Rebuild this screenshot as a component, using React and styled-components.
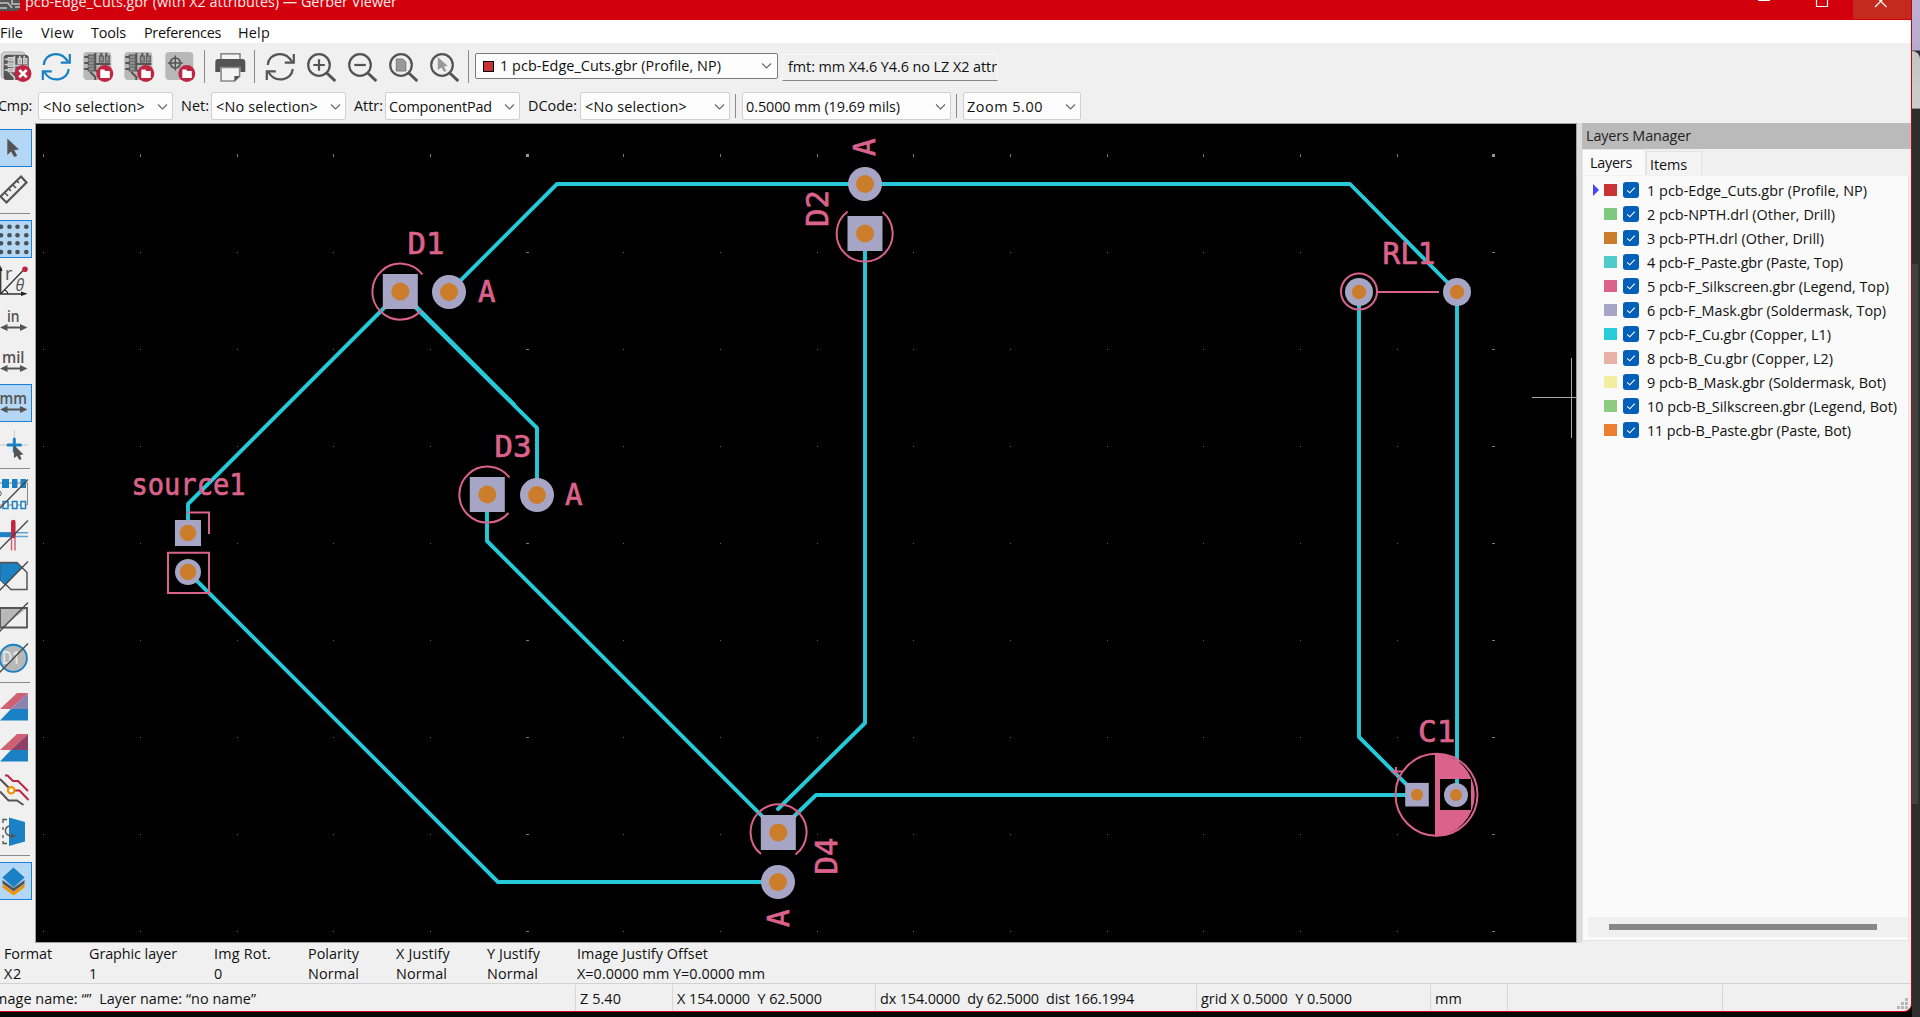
import React, { useLayoutEffect, useRef, useState } from "react";
import styled, { createGlobalStyle } from "styled-components";

const UI = '"Open Sans", "Noto Sans", sans-serif';
const INK = "#545454";
const BLUE = "#1a81c4";
const RED = "#bf2641";
const COPPER = "#26c9d8";
const SILK = "#db628b";
const MASK = "#a7a5c6";
const DRILL = "#cc7d2b";

const GlobalStyle = createGlobalStyle`
  html, body { margin: 0; padding: 0; overflow: hidden; background: #050505; }
  *, *::before, *::after { box-sizing: border-box; }
  svg { display: block; }
`;

const Desktop = styled.div`
  display: flex;
  width: 1920px;
  height: 1017px;
  overflow: hidden;
  background: #050505;
  font: 14.4px/20px ${UI};
  color: #111;
`;
const Window = styled.div`
  display: flex;
  flex-direction: column;
  width: 1912px;
  height: 1012px;
  background: #f0f0f0;
  border-right: 1px solid #c00410;
  border-bottom: 1px solid #c8030f;
  border-bottom-right-radius: 8px;
  overflow: hidden;
`;
const Backdrop = styled.div`
  display: flex;
  flex-direction: column;
  width: 8px;
  height: 1017px;
  background: linear-gradient(#bfb0d6, #b9aad0 50px, #2d2d2d 51px);
`;
const BackCard = styled.div`
  margin-top: 51px;
  height: 58px;
  background: linear-gradient(#c4c4c4, #cdcdca);
  border-top-right-radius: 8px;
  border-bottom: 1px solid #8a8a8a;
`;
const BackEdge = styled.div`
  margin-top: 155px;
  height: 540px;
  width: 6px;
  background: #414141;
`;

const Run = styled.span`
  display: inline-block;
  white-space: pre;
  flex: none;
`;
function T({ w, children }) {
  const ref = useRef(null);
  const [spacing, setSpacing] = useState(0);
  useLayoutEffect(() => {
    const natural = ref.current.getBoundingClientRect().width;
    setSpacing((w + 1 - natural) / String(children).length);
  }, [w, children]);
  return <Run ref={ref} style={{ letterSpacing: spacing }}>{children}</Run>;
}

const TitleBar = styled.div`
  display: flex;
  height: 20px;
  flex: none;
  background: #d2000d;
  color: #fff;
  overflow: hidden;
`;
const TitleText = styled.div`
  flex: 1;
  padding-left: 5px;
  margin-top: -8px;
  color: #ffe9e9;
`;
const TitleButton = styled.div`
  width: 58px;
  height: 19px;
  background: ${(p) => (p.$close ? "#c52b1c" : "transparent")};
`;

const MenuBar = styled.div`
  display: flex;
  align-items: center;
  height: 23px;
  flex: none;
  padding-top: 2px;
  background: #fff;
`;
const MenuItem = styled.div`
  width: ${(p) => p.$w}px;
`;

const Toolbar = styled.div`
  display: flex;
  align-items: center;
  height: 46px;
  flex: none;
`;
const ToolButton = styled.div`
  width: 32px;
  height: 32px;
  margin-right: 9px;
  flex: none;
`;
const Divider = styled.div`
  width: 1px;
  height: ${(p) => p.$h || 33}px;
  background: #8a8a8a;
  margin: 0 ${(p) => p.$after}px 0 ${(p) => p.$before || 0}px;
  flex: none;
`;
const Combo = styled.div`
  display: flex;
  align-items: center;
  justify-content: space-between;
  width: ${(p) => p.$w}px;
  height: ${(p) => (p.$strong ? 26 : 28)}px;
  padding: ${(p) => (p.$strong ? 0 : 2)}px ${(p) => (p.$strong ? 5 : 4)}px 0 ${(p) => p.$pad || 4}px;
  background: #fdfdfd;
  border: 1px solid ${(p) => (p.$strong ? "#7a7a7a" : "#d0d0d0")};
  border-radius: 2px;
  margin-right: ${(p) => p.$gap || 0}px;
  flex: none;
`;
const ComboLabel = styled.div`
  display: flex;
  align-items: center;
`;
const Chip = styled.span`
  width: 11px;
  height: 11px;
  margin-right: 6px;
  background: #c83434;
  border: 1px solid #000;
`;
const FormatBox = styled.div`
  display: flex;
  align-items: center;
  width: 216px;
  height: 27px;
  padding-left: 5px;
  margin-top: 2px;
  border: 1px solid #f9f9f9;
  border-bottom: 1px solid #868686;
`;
const OptionBar = styled.div`
  display: flex;
  align-items: center;
  height: 34px;
  flex: none;
`;
const OptionLabel = styled.div`
  width: ${(p) => p.$w}px;
  margin-left: ${(p) => p.$ml || 0}px;
  flex: none;
`;

const Main = styled.div`
  display: flex;
  height: 820px;
  flex: none;
`;
const SideBar = styled.div`
  display: flex;
  flex-direction: column;
  width: 35px;
  padding-top: 6px;
  flex: none;
`;
const SideButton = styled.div`
  width: 32px;
  height: 38px;
  margin-bottom: 3px;
  flex: none;
  border: 1px solid ${(p) => (p.$on ? "#1a7fd8" : "transparent")};
  border-left: none;
  background: ${(p) => (p.$on ? "#b3d7f4" : "transparent")};
`;
const SideRule = styled.div`
  width: 30px;
  height: 1px;
  margin: 2px 0 6px;
  background: #8a8a8a;
  flex: none;
`;
const Board = styled.div`
  width: 1542px;
  height: 820px;
  flex: none;
  border: 1px solid #a0a0a0;
  background: #000;
  overflow: hidden;
`;
const Sash = styled.div`
  width: 5px;
  background: #dcdcdc;
  flex: none;
`;

const Panel = styled.div`
  display: flex;
  flex-direction: column;
  flex: 1;
`;
const PanelTitle = styled.div`
  display: flex;
  align-items: center;
  height: 26px;
  padding-left: 4px;
  background: #bababa;
  color: #222;
  flex: none;
`;
const Tabs = styled.div`
  display: flex;
  align-items: flex-end;
  height: 27px;
  flex: none;
`;
const Tab = styled.div`
  width: ${(p) => p.$w}px;
  height: ${(p) => (p.$on ? 27 : 26)}px;
  padding: 3px 0 0 ${(p) => p.$pad}px;
  background: ${(p) => (p.$on ? "#fafafa" : "#f4f4f4")};
  border: 1px solid #e3e3e3;
  border-bottom: none;
  margin-bottom: ${(p) => (p.$on ? "0" : "-1px")};
`;
const Sheet = styled.div`
  display: flex;
  flex-direction: column;
  justify-content: space-between;
  width: 327px;
  height: 766px;
  margin-top: -1px;
  padding-top: 2px;
  background: #fafafa;
  border: 1px solid #e4e4e4;
  border-top-color: #f0f0f0;
`;
const LayerRow = styled.div`
  display: flex;
  align-items: center;
  height: 24px;
  padding-left: 10px;
`;
const LayerName = styled.span`
  display: flex;
  padding-top: 1px;
`;
const Marker = styled.span`
  width: 6px;
  height: 12px;
  margin-right: 5px;
  background: ${(p) => (p.$on ? "#4646f5" : "transparent")};
  clip-path: polygon(0 0, 100% 50%, 0 100%);
`;
const Swatch = styled.span`
  width: 13px;
  height: 12px;
  background: ${(p) => p.$c};
`;
const Check = styled.span`
  width: 16px;
  height: 16px;
  margin: 0 8px 0 6px;
  border-radius: 3px;
  background: #005fb8;
`;
const ScrollTrack = styled.div`
  height: 20px;
  margin: 0 0 3px 5px;
  padding: 7px 0 0 21px;
  background: #f0f0f0;
`;
const ScrollThumb = styled.div`
  width: 268px;
  height: 6px;
  background: #878787;
`;

const Info = styled.div`
  display: flex;
  height: 40px;
  flex: none;
  padding-left: 4px;
  padding-top: 1px;
`;
const InfoCell = styled.div`
  display: flex;
  flex-direction: column;
  align-items: flex-start;
  width: ${(p) => p.$w}px;
  flex: none;
`;
const StatusBar = styled.div`
  display: flex;
  flex: 1;
  border-top: 1px solid #d2d2d2;
`;
const StatusCell = styled.div`
  width: ${(p) => p.$w}px;
  padding: 4px 0 0 4px;
  margin-top: 1px;
  border-left: ${(p) => (p.$first ? "none" : "1px solid #d6d6d6")};
  flex: none;
`;
const StatusFirst = styled(StatusCell)`
  padding-left: 0;
  text-indent: -5px;
  overflow: hidden;
`;
const Grip = styled.div`
  margin-left: auto;
  align-self: flex-end;
`;

const Chevron = () => (
  <svg width="11" height="8" viewBox="0 0 11 8" fill="none" stroke="#666" strokeWidth="1.1">
    <path d="M1 1.5 5.5 6 10 1.5" />
  </svg>
);

/* ---------- top toolbar drawings ---------- */
const Svg32 = ({ children }) => (
  <svg width="32" height="32" viewBox="0.7 0 32 32" fill="none">{children}</svg>
);
const GerberTile = ({ dark }) => (
  <g>
    <rect x="2" y="2" width="28" height="28" rx="4" fill={dark ? "#545454" : "#b8b8b8"} />
    <g stroke={dark ? "#c8c8c8" : "#545454"} strokeWidth="2">
      <path d="M3 7h6M3 13h6M3 19h6M14 3v9M20 3v7M25 3v5M14 14h15M14 12v8l6 5v5M20 18h9M9 22l5 5v3" />
    </g>
    <g fill={dark ? "#b8b8b8" : "#8e8e8e"} stroke={dark ? "#dadada" : "#545454"}>
      <rect x="7" y="5" width="6" height="4" /><rect x="7" y="11" width="6" height="4" />
      <rect x="7" y="17" width="6" height="4" /><rect x="18" y="6" width="4" height="6" />
      <rect x="24" y="6" width="4" height="6" />
    </g>
  </g>
);
const FolderBadge = () => (
  <g>
    <circle cx="23.5" cy="23.5" r="8.5" fill={RED} />
    <path d="M19 19.5h4l1 1.5h4.5v7H19z" fill="#fff" />
  </g>
);
const ClearIcon = () => (
  <Svg32>
    <rect x="2" y="2" width="24" height="27" rx="4" fill="#d4d4d4" stroke="#aaa" />
    <g transform="translate(2.5 3) scale(.9)"><GerberTile dark /></g>
    <circle cx="23.7" cy="23.5" r="8.5" fill={RED} />
    <path d="m20 20 7.4 7.2m0-7.2L20 27.2" stroke="#fff" strokeWidth="2.6" />
  </Svg32>
);
const Refresh = ({ color }) => (
  <Svg32>
    <g stroke={color} strokeWidth="2.2">
      <path d="M3.5 15C4 3.5 20-1 28 12" /><path d="M29.5 4v8.7h-9" />
      <path d="M28.5 19C27 31 11 33.5 4 22" /><path d="M2.5 30v-8.7h9" />
    </g>
  </Svg32>
);
const OpenGerber = () => <Svg32><GerberTile /><FolderBadge /></Svg32>;
const OpenDrill = () => (
  <Svg32>
    <rect x="2" y="2" width="28" height="28" rx="4" fill="#b8b8b8" />
    <circle cx="12" cy="13" r="5" stroke={INK} strokeWidth="1.7" />
    <path d="M4.5 13h15M12 5.5v15" stroke={INK} strokeWidth="1.4" />
    <FolderBadge />
  </Svg32>
);
const Printer = () => (
  <Svg32>
    <rect x="6.7" y="3.8" width="19" height="7" fill="#f4f4f4" stroke="#888" strokeWidth="1.6" />
    <path d="M1 12q0-3 3-3h24q3 0 3 3v10h-5v-5H6v5H1z" fill={INK} />
    <path d="M6.8 17.5h18.5v9l-5 4.500H6.8z" fill="#f4f4f4" stroke="#888" strokeWidth="1.6" />
    <path d="m25.5 26-5.5 5.5V26z" fill={INK} />
  </Svg32>
);
const Zoomer = ({ kind }) => (
  <Svg32>
    <circle cx="13.7" cy="15" r="10.8" stroke={INK} strokeWidth="2.2" />
    <path d="m21.5 23 8.5 8" stroke={INK} strokeWidth="3" />
    {kind === "in" && <path d="M8 15h11.5M13.7 9.3v11.5" stroke={INK} strokeWidth="2.2" />}
    {kind === "out" && <path d="M8 15h11.5" stroke={INK} strokeWidth="2.2" />}
    {kind === "fit" && <path d="M9 9h6.5l3 3v9H9z" fill="#999" stroke="#777" />}
    {kind === "sel" && <path d="M9.5 7v13l3.5-2.5 3 4.5 2-1-2.3-4.5 3.8-.5z" fill="#999" />}
  </Svg32>
);

/* ---------- left toolbar drawings ---------- */
const Svg36 = ({ children }) => (
  <svg width="31" height="36" viewBox="0 0 31 36" fill="none">{children}</svg>
);
const Slash = () => <path d="M28 3.5-1 33" stroke="#484848" strokeWidth="1.3" />;
const IconText = styled.text`
  font-family: ${UI};
  font-weight: ${(p) => p.$b || 600};
`;
const Unit = ({ x, w, children }) => (
  <Svg36>
    <IconText x={x} y="18.5" fontSize="16" textLength={w} lengthAdjust="spacingAndGlyphs" fill={INK}>{children}</IconText>
    <path d="M3 24.5h21" stroke={INK} strokeWidth="2" />
    <path d="M0 24.5 7.5 21v7zM27.5 24.5 20 21v7z" fill={INK} />
  </Svg36>
);
const StackIcon = ({ overlap }) => (
  <Svg36>
    <path d="M0 19 17 3h11L11 19z" fill="#cf6174" /><path d="M28 3v16H11z" fill={overlap} />
    <path d="M11 19h17v11.500H0z" fill={BLUE} />
  </Svg36>
);
const sideIcons = {
  arrow: <Svg36><path d="M7.3 8.5v16.5l3.7-3.5 3.2 5.500 3-1.300-3-5.700 4.800-.5z" fill={INK} /></Svg36>,
  ruler: (
    <Svg36>
      <path d="M21 5.5 26.5 11.5 6.5 31.5.5 25.5z" stroke={INK} strokeWidth="2.2" />
      <path d="m5 22 3 3m1-7 2 2m2-6 3 3m1-7 2 2" stroke={INK} strokeWidth="1.7" />
    </Svg36>
  ),
  grid: (
    <Svg36>
      {[1, 9.5, 17.5, 26.3].map((x) => [5.7, 14.3, 22.3, 31].map((y) => (
        <circle key={`${x}-${y}`} cx={x} cy={y} r="2.3" fill="#4a5056" />
      )))}
    </Svg36>
  ),
  polar: (
    <Svg36>
      <path d="M.7 6v26h23M1 31.5 24 7.5M4.5 28q3 1 3.5 4" stroke="#333" strokeWidth="1.3" />
      <path d="M27.5 31.7 21 29.5v4.500zM.5 3l2 6H0z" fill="#222" />
      <circle cx="25" cy="7.3" r="2.8" fill={RED} />
      <IconText $b={500} x="5" y="18" fontSize="18" fill={INK}>r</IconText>
      <IconText $b={500} x="15.5" y="28.5" fontSize="16" fontStyle="italic" fill={INK}>θ</IconText>
    </Svg36>
  ),
  inch: <Unit x={7} w={12.5}>in</Unit>,
  mil: <Unit x={2} w={22.5}>mil</Unit>,
  mm: <Unit x={-0.5} w={27.5}>mm</Unit>,
  cursor: (
    <Svg36>
      <path d="M14.3 4v28M0 19h28" stroke="#c8c8c8" />
      <path d="M14.3 13v12.5M8 19h12.5" stroke={BLUE} strokeWidth="3" strokeLinecap="round" />
      <path d="M14 19v13l3-2 2.5 4 2-1-1.5-4 3.5-.5z" fill={INK} />
    </Svg36>
  ),
  dcodes: (
    <Svg36>
      <path d="M0 7h28M0 29h27M27.5 7v22" stroke="#888" />
      <path d="M2 3h7v9H2zM12 3h5.5v9H12zM20.5 3h5.5v9h-5.5z" fill={BLUE} />
      <path d="M3 25.5h5v7H3zM12.5 25.5h4.5v7h-4.500zM21 25.500h4.500v7H21z" fill="#f0f0f0" stroke={BLUE} strokeWidth="1.5" />
      <path d="M0 15q3 2 0 5" stroke={INK} />
      <Slash />
    </Svg36>
  ),
  lines: (
    <Svg36>
      <path d="M0 15.7h28M0 19.5h28" stroke="#5aa2d2" strokeWidth="1.6" />
      <path d="M0 17.7h12" stroke={BLUE} strokeWidth="4.5" />
      <path d="M11.5 17v16.500M15 17v16.500" stroke="#d0607a" strokeWidth="1.5" />
      <path d="M13.3 5v14" stroke={RED} strokeWidth="4.5" strokeLinecap="round" />
      <Slash />
    </Svg36>
  ),
  polygons: (
    <Svg36>
      <path d="M0 4.5h17l10 10v17H11L0 21z" stroke={INK} strokeWidth="1.5" />
      <path d="M0 5h17l5 5L5 27l-5-5z" fill={BLUE} stroke={INK} />
      <Slash />
    </Svg36>
  ),
  negative: (
    <Svg36>
      <path d="M0 9h27L2 29H0z" fill="#b8b8b8" />
      <path d="M0 9h27v19.500H0z" stroke="#555" strokeWidth="1.8" />
      <Slash />
    </Svg36>
  ),
  dnum: (
    <Svg36>
      <circle cx="13.3" cy="18.3" r="13.6" fill="#b8b8b8" stroke={BLUE} strokeWidth="1.9" />
      <IconText x="2" y="23.5" fontSize="18" textLength="18" lengthAdjust="spacingAndGlyphs" fill="#e8e8e8">D1</IconText>
      <Slash />
    </Svg36>
  ),
  stack: <StackIcon overlap="#8984b0" />,
  stackDark: <StackIcon overlap="#8d4068" />,
  xor: (
    <Svg36>
      <path d="M5 3.5h2.5L13 9h5l10 10M15 18.5h4.5l9 9.5" stroke={RED} strokeWidth="2" />
      <path d="m0 7 9 9M0 19.5l8.5 9H17l6.5 4.5" stroke={INK} strokeWidth="2" />
      <circle cx="11.2" cy="18.3" r="3.2" fill="#fff" stroke="#f39200" strokeWidth="2.2" />
    </Svg36>
  ),
  flip: (
    <Svg36>
      <path d="M9 4.5 25 9v19.500L9 33z" fill={BLUE} />
      <path d="M7 6.500H3V10M3 14v3M3 22v3M3 28v2.500h4" stroke={INK} strokeWidth="1.3" />
      <path d="M9 13c-5 2-5 9 2 10" stroke={INK} strokeWidth="1.4" /><path d="m16 23-5-2.500v5z" fill={INK} />
    </Svg36>
  ),
  layers: (
    <Svg36>
      <path d="m2.5 21 11 8 11-8v3.500l-11 8-11-8z" fill="#f39200" />
      <path d="m2.5 17 11 8 11-8v3.500l-11 8-11-8z" fill={INK} />
      <path d="m13.5 4.500 11.200 10-11.200 10-11.200-10z" fill={BLUE} />
    </Svg36>
  ),
};
const side = [
  ["arrow", 1], ["ruler"], null, ["grid", 1], ["polar"], ["inch"], ["mil"], ["mm", 1], ["cursor"], null,
  ["dcodes"], ["lines"], ["polygons"], ["negative"], ["dnum"], null,
  ["stack"], ["stackDark"], ["xor"], ["flip"], null, ["layers", 1],
];

/* ---------- board drawing ---------- */
const SilkText = styled.text`
  font-family: "DejaVu Sans Mono", monospace;
  font-size: 30.5px;
  fill: ${SILK};
  stroke: ${SILK};
  stroke-width: 0.7px;
`;
const Ref = ({ x, y, w, up, children }) => (
  <SilkText
    transform={`translate(${x} ${y})${up ? " rotate(-90)" : ""}`}
    textLength={w}
    lengthAdjust="spacingAndGlyphs"
  >
    {children}
  </SilkText>
);
const Pad = ({ x, y, r, d, square }) => (
  <g>
    {square
      ? <rect x={x - r} y={y - r} width={r * 2} height={r * 2} fill={MASK} />
      : <circle cx={x} cy={y} r={r} fill={MASK} />}
    <circle cx={x} cy={y} r={d} fill={DRILL} />
  </g>
);
const gridDots = [];
for (let i = 0; i < 16; i++) {
  for (let j = 0; j < 9; j++) {
    const wide = i % 10 === 5;
    const tall = j === 0;
    gridDots.push(
      <rect
        key={`${i}-${j}`}
        x={Math.round(43.2 + i * 96.67) - (wide ? 1 : 0)}
        y={Math.round(155 + j * 96.95) - (tall ? 1 : 0)}
        width={wide ? 3 : 1}
        height={tall ? 3 : 1}
        fill={wide && tall ? "#959595" : wide || tall ? "#777" : "#606060"}
      />
    );
  }
}
const BoardDrawing = () => (
  <svg width="1540" height="818" viewBox="36 124 1540 818" fill="none">
    {gridDots}
    <g stroke={COPPER} strokeWidth="3.9" strokeLinecap="round" strokeLinejoin="round">
      <path d="M449 292 557 184H1350L1457 292V795" />
      <path d="M1359 292V737L1417 795" />
      <path d="M865 234V723L778 809" />
      <path d="M778 832 816 795H1417" />
      <path d="M487 495V541L778 832" />
      <path d="M537 495V428L400 292 188 504V533" />
      <path d="M401 291.5 514 404.5" />
      <path d="M188 572 498 882H778" />
    </g>
    <g stroke={SILK} strokeWidth="2">
      <path d="M422.5 274.5A28 28 0 1 0 421.5 310" />
      <path d="M847.5 211.5A28 28 0 1 0 882.5 212" />
      <path d="M509.5 477.5A28 28 0 1 0 508.5 513" />
      <path d="M761 854A28 28 0 1 1 795.5 854.5" />
      <path d="M187 512.5H209V534M168 552.7H209V593H168z" />
      <circle cx="1359" cy="291.5" r="18" />
      <path d="M1377 292H1439" />
      <circle cx="1436.5" cy="794.7" r="41" />
      <path d="M1391 771.5H1402M1396 767V776" />
    </g>
    <path fillRule="evenodd" fill={SILK} d="M1435 753A41.8 41.8 0 0 1 1435 836.5zM1440 779H1471V810H1440z" />
    <Pad x={400.3} y={291.5} r={17.5} d={9} square />
    <Pad x={449} y={292} r={17} d={9} />
    <Pad x={865} y={184} r={17} d={9} />
    <Pad x={865} y={233.5} r={17.5} d={9} square />
    <Pad x={487.3} y={494.5} r={17.5} d={9} square />
    <Pad x={537} y={495} r={17} d={9} />
    <Pad x={778.3} y={832.5} r={17.5} d={9} square />
    <Pad x={778} y={882} r={17} d={9} />
    <Pad x={188} y={533} r={13} d={8.2} square />
    <Pad x={188} y={572} r={13} d={8.2} />
    <Pad x={1359} y={292} r={14} d={7.2} />
    <Pad x={1457} y={292} r={14} d={7.2} />
    <Pad x={1417} y={794.7} r={11.8} d={6} square />
    <Pad x={1456} y={795} r={12} d={6} />
    <Ref x={407.5} y={254} w={37}>D1</Ref>
    <Ref x={478} y={301.5} w={17.5}>A</Ref>
    <Ref x={494.5} y={457} w={37}>D3</Ref>
    <Ref x={565} y={505} w={17.5}>A</Ref>
    <Ref x={827.5} y={227} w={37} up>D2</Ref>
    <Ref x={875} y={156} w={17.5} up>A</Ref>
    <Ref x={836.5} y={874.5} w={37} up>D4</Ref>
    <Ref x={788.5} y={927} w={17.5} up>A</Ref>
    <Ref x={131.5} y={494.5} w={114}>source1</Ref>
    <Ref x={1382.5} y={264} w={53}>RL1</Ref>
    <Ref x={1418} y={742} w={37.5}>C1</Ref>
    <path d="M1532 397.5H1576M1571.5 358V438" stroke="#a8a8a8" />
  </svg>
);

const layers = [
  ["#c83434", "1 pcb-Edge_Cuts.gbr (Profile, NP)", 219],
  ["#7fc87f", "2 pcb-NPTH.drl (Other, Drill)", 187],
  ["#cc7d2b", "3 pcb-PTH.drl (Other, Drill)", 176],
  ["#4fcbcb", "4 pcb-F_Paste.gbr (Paste, Top)", 195],
  ["#db628b", "5 pcb-F_Silkscreen.gbr (Legend, Top)", 241],
  ["#a7a5c6", "6 pcb-F_Mask.gbr (Soldermask, Top)", 238],
  ["#26ccd8", "7 pcb-F_Cu.gbr (Copper, L1)", 183],
  ["#e8b2a7", "8 pcb-B_Cu.gbr (Copper, L2)", 185],
  ["#f2eda1", "9 pcb-B_Mask.gbr (Soldermask, Bot)", 238],
  ["#8dcb81", "10 pcb-B_Silkscreen.gbr (Legend, Bot)", 249],
  ["#ed7d31", "11 pcb-B_Paste.gbr (Paste, Bot)", 203],
];
const info = [
  ["Format", 47, "X2", 17, 85],
  ["Graphic layer", 87, "1", 7, 125],
  ["Img Rot.", 56, "0", 8, 94],
  ["Polarity", 50, "Normal", 50, 88],
  ["X Justify", 53, "Normal", 50, 91],
  ["Y Justify", 52, "Normal", 50, 90],
  ["Image Justify Offset", 130, "X=0.0000 mm Y=0.0000 mm", 187, 200],
];

export default function App() {
  return (
    <Desktop>
      <GlobalStyle />
      <Window>
        <TitleBar>
          <svg width="20" height="20" viewBox="0 0 20 20">
            <path d="M0 0h20v7q0 4-4 4H0z" fill="#545454" />
            <path d="M0 3h8l4 5M0 8h7M12 0v4h8M15 7h5" stroke="#c4c4c4" fill="none" strokeWidth="1.5" />
          </svg>
          <TitleText><T w={371}>pcb-Edge_Cuts.gbr (with X2 attributes) — Gerber Viewer</T></TitleText>
          <TitleButton><svg width="58" height="19"><path d="M21 .5h12" stroke="#fff" strokeWidth="1" /></svg></TitleButton>
          <TitleButton><svg width="58" height="19"><path d="M21.5-1v7.5h11V-1" stroke="#fff" fill="none" strokeWidth="1.2" /></svg></TitleButton>
          <TitleButton $close><svg width="58" height="19"><path d="M22 7 33.5-4.5M33.5 7 22-4.5" stroke="#fff" strokeWidth="1.2" /></svg></TitleButton>
        </TitleBar>
        <MenuBar>
          <MenuItem $w={41}><T w={22}>File</T></MenuItem>
          <MenuItem $w={50}><T w={32}>View</T></MenuItem>
          <MenuItem $w={53}><T w={34}>Tools</T></MenuItem>
          <MenuItem $w={94}><T w={76}>Preferences</T></MenuItem>
          <MenuItem $w={60}><T w={31}>Help</T></MenuItem>
        </MenuBar>
        <Toolbar>
          <ToolButton><ClearIcon /></ToolButton>
          <ToolButton><Refresh color={BLUE} /></ToolButton>
          <ToolButton><OpenGerber /></ToolButton>
          <ToolButton><OpenGerber /></ToolButton>
          <ToolButton><OpenDrill /></ToolButton>
          <Divider $before={-1} $after={10} />
          <ToolButton><Printer /></ToolButton>
          <Divider $before={-2} $after={10} />
          <ToolButton><Refresh color={INK} /></ToolButton>
          <ToolButton><Zoomer kind="in" /></ToolButton>
          <ToolButton><Zoomer kind="out" /></ToolButton>
          <ToolButton><Zoomer kind="fit" /></ToolButton>
          <ToolButton><Zoomer kind="sel" /></ToolButton>
          <Divider $before={-2} $after={6} />
          <Combo $w={303} $strong $pad={7} $gap={4}>
            <ComboLabel><Chip /><T w={220}>1 pcb-Edge_Cuts.gbr (Profile, NP)</T></ComboLabel>
            <Chevron />
          </Combo>
          <FormatBox><T w={208}>fmt: mm X4.6 Y4.6 no LZ X2 attr</T></FormatBox>
        </Toolbar>
        <OptionBar>
          <OptionLabel $w={40} $ml={-2}><T w={33}>Cmp:</T></OptionLabel>
          <Combo $w={135} $gap={8}><T w={101}>{"<No selection>"}</T><Chevron /></Combo>
          <OptionLabel $w={30}><T w={27}>Net:</T></OptionLabel>
          <Combo $w={135} $gap={8}><T w={101}>{"<No selection>"}</T><Chevron /></Combo>
          <OptionLabel $w={31}><T w={28}>Attr:</T></OptionLabel>
          <Combo $w={135} $pad={3} $gap={8}><T w={102}>ComponentPad</T><Chevron /></Combo>
          <OptionLabel $w={52}><T w={48}>DCode:</T></OptionLabel>
          <Combo $w={150} $gap={5}><T w={101}>{"<No selection>"}</T><Chevron /></Combo>
          <Divider $h={24} $after={6} />
          <Combo $w={209} $pad={3} $gap={5}><T w={153}>0.5000 mm (19.69 mils)</T><Chevron /></Combo>
          <Divider $h={24} $after={6} />
          <Combo $w={118} $pad={3}><T w={75}>Zoom 5.00</T><Chevron /></Combo>
        </OptionBar>
        <Main>
          <SideBar>
            {side.map((s, i) => s
              ? <SideButton key={i} $on={s[1]}>{sideIcons[s[0]]}</SideButton>
              : <SideRule key={i} />)}
          </SideBar>
          <Board><BoardDrawing /></Board>
          <Sash />
          <Panel>
            <PanelTitle><T w={104}>Layers Manager</T></PanelTitle>
            <Tabs>
              <Tab $on $w={64} $pad={7}><T w={41}>Layers</T></Tab>
              <Tab $w={56} $pad={3}><T w={36}>Items</T></Tab>
            </Tabs>
            <Sheet>
              <div>
                {layers.map(([c, name, w], i) => (
                  <LayerRow key={name}>
                    <Marker $on={i === 0} />
                    <Swatch $c={c} />
                    <Check>
                      <svg width="16" height="16" viewBox="0 0 16 16" fill="none" stroke="#fff" strokeWidth="1.1">
                        <path d="m4.2 8.3 2.6 2.5 5-5.2" />
                      </svg>
                    </Check>
                    <LayerName><T w={w}>{name}</T></LayerName>
                  </LayerRow>
                ))}
              </div>
              <ScrollTrack><ScrollThumb /></ScrollTrack>
            </Sheet>
          </Panel>
        </Main>
        <Info>
          {info.map(([a, aw, b, bw, w]) => (
            <InfoCell key={a} $w={w}><T w={aw}>{a}</T><T w={bw}>{b}</T></InfoCell>
          ))}
        </Info>
        <StatusBar>
          <StatusFirst $first $w={575}><T w={260}>{"Image name: “”  Layer name: “no name”"}</T></StatusFirst>
          <StatusCell $w={97}><T w={40}>Z 5.40</T></StatusCell>
          <StatusCell $w={203}><T w={144}>{"X 154.0000  Y 62.5000"}</T></StatusCell>
          <StatusCell $w={321}><T w={253}>{"dx 154.0000  dy 62.5000  dist 166.1994"}</T></StatusCell>
          <StatusCell $w={234}><T w={150}>{"grid X 0.5000  Y 0.5000"}</T></StatusCell>
          <StatusCell $w={77}><T w={26}>mm</T></StatusCell>
          <StatusCell $w={215} />
          <StatusCell $w={100} />
          <Grip>
            <svg width="14" height="14" viewBox="0 0 14 14" fill="#b8b8b8">
              <path d="M8 1h3v3H8zM4 5h3v3H4zM8 5h3v3H8zM0 9h3v3H0zM4 9h3v3H4zM8 9h3v3H8z" />
            </svg>
          </Grip>
        </StatusBar>
      </Window>
      <Backdrop><BackCard /><BackEdge /></Backdrop>
    </Desktop>
  );
}
